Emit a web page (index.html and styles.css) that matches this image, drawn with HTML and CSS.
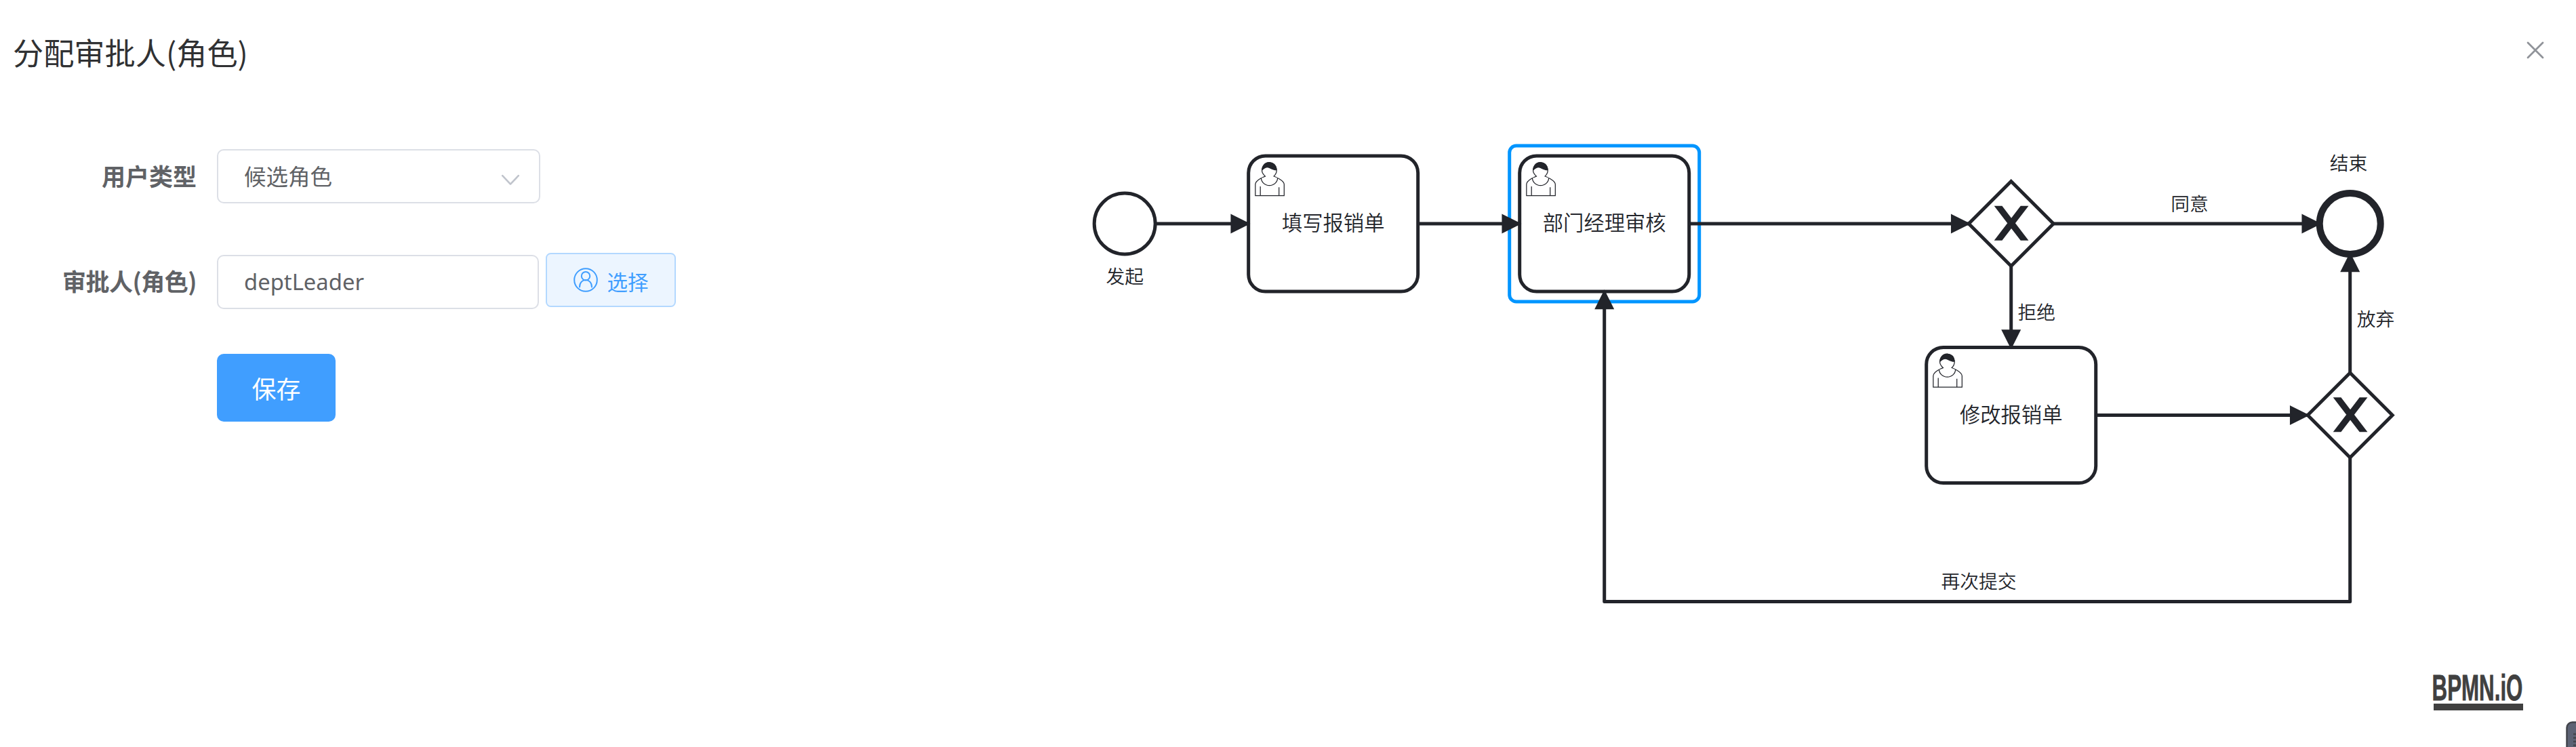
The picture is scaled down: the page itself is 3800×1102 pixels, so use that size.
FILE: index.html
```html
<!DOCTYPE html>
<html lang="zh-CN">
<head>
<meta charset="utf-8">
<title>分配审批人(角色)</title>
<link rel="stylesheet" href="styles.css">
</head>
<body>
<main class="dialog">
  <header class="dialog-header">
    <h1 class="dialog-title">分配审批人(角色)</h1>
    <button class="close" aria-label="关闭"><svg width="26" height="26" viewBox="0 0 26 26"><path d="M2 2 24 24M24 2 2 24"/></svg></button>
  </header>
  <div class="dialog-body">
    <form class="form">
      <div class="row row-type">
        <label class="label">用户类型</label>
        <div class="field select"><span>候选角色</span><svg class="chevron" width="28" height="18" viewBox="0 0 28 18"><path d="M2.2 2.2 14 14.6 25.8 2.2"/></svg></div>
      </div>
      <div class="row row-user">
        <label class="label">审批人(角色)</label>
        <div class="field input">deptLeader</div>
        <button class="pick" type="button">
          <svg width="36" height="36" viewBox="0 0 36 36"><circle cx="18" cy="18" r="16.8"/><circle cx="18" cy="12.2" r="6.2"/><path d="M9 28.5C9 14.5 27 14.5 27 28.5"/></svg>
          <span>选择</span>
        </button>
      </div>
      <div class="row row-save"><button class="save" type="button">保存</button></div>
    </form>
    <svg class="canvas" width="2200" height="962" viewBox="1600 140 2200 962">
      <defs>
        <marker id="arrow" viewBox="0 0 20 20" refX="11" refY="10" markerWidth="10" markerHeight="10" orient="auto"><path class="arrowhead" d="M1 5 11 10 1 15Z"/></marker>
        <g id="task">
          <rect class="shape" width="100" height="80" rx="10"/>
          <g transform="translate(15 12)">
            <path class="person" d="m0,0 c0.909,-0.845 1.594,-2.049 1.594,-3.385 0,-2.554 -1.805,-4.622 -4.357,-4.622 -2.552,0 -4.288,2.068 -4.288,4.622 0,1.348 0.974,2.562 1.896,3.405 -0.529,0.187 -5.669,2.097 -5.794,4.756 v6.718 h17 v-6.718 c0,-2.298 -5.528,-4.595 -6.051,-4.776z m-8,6 l0,5.5 m11,0 l0,-5"/>
            <path class="person" d="m2.162,1.009 c0,2.447 -2.158,4.431 -4.821,4.431 -2.665,0 -4.822,-1.981 -4.822,-4.431"/>
            <path class="person hair" d="m-6.9,-3.8 c0,0 2.251,-2.358 4.274,-1.177 2.024,1.181 4.221,1.537 4.124,0.965 -0.098,-0.57 -0.117,-3.791 -4.191,-4.136 -3.572,0.001 -4.208,3.67 -4.207,4.348z"/>
          </g>
        </g>
        <g id="gateway">
          <path class="shape" d="M0-25 25 0 0 25-25 0Z"/>
          <path class="cross" d="M-1.57-.29-9 9.42h3.43L.14 1.96 5.86 9.42H9.29L1.86-.29 9.29-10H5.86L.14-2.54-5.57-10H-9Z"/>
        </g>
      </defs>
      <g transform="translate(1841.7 230) scale(2.5)">
        <circle class="shape" cx="-73" cy="40" r="18"/>
        <use href="#task"/>
        <rect class="selection" x="154" y="-6" width="112" height="92" rx="4"/>
        <use href="#task" x="160"/>
        <use href="#task" x="400" y="113"/>
        <use href="#gateway" x="450" y="40"/>
        <use href="#gateway" x="650" y="153"/>
        <circle class="shape end" cx="650" cy="40" r="18"/>
        <g class="flows">
          <path d="M-55 40H0"/><path d="M100 40H160"/><path d="M260 40H425"/><path d="M475 40H632"/>
          <path d="M450 65V113"/><path d="M500 153H625"/><path d="M650 128V58"/><path d="M650 178V263H210V80"/>
        </g>
      </g>
      <g class="names">
        <text x="1966.7" y="340">填写报销单</text>
        <text x="2366.7" y="340">部门经理审核</text>
        <text x="2966.7" y="623">修改报销单</text>
      </g>
      <g class="names small">
        <text x="1659.2" y="418">发起</text>
        <text x="3464.5" y="251">结束</text>
        <text x="3230" y="311">同意</text>
        <text x="3004.2" y="471">拒绝</text>
        <text x="3504.5" y="481">放弃</text>
        <text x="2919" y="868">再次提交</text>
      </g>
      <g class="logo">
        <rect x="3590" y="1038" width="132" height="10"/>
        <text transform="translate(3587.6 1033) scale(.585 1)">BPMN.iO</text>
      </g>
      <g class="widget">
        <rect x="3786.5" y="1065.5" width="40" height="60" rx="8"/>
        <path d="M3796 1083h6M3796 1088.500h6M3796 1094h6M3796 1099.500h6"/>
      </g>
    </svg>
  </div>
</main>
</body>
</html>
```
FILE: styles.css
```css
* { box-sizing: border-box; }
body {
  margin: 0;
  background: #fff;
  color: #606266;
  font-family: "Noto Sans CJK SC", sans-serif;
  overflow: hidden;
}
button { font: inherit; padding: 0; margin: 0; }
.dialog { width: 3800px; height: 1102px; display: flex; flex-direction: column; }
.dialog-header {
  height: 140px;
  padding: 47px 47px 0 19px;
  display: flex;
  justify-content: space-between;
  align-items: flex-start;
}
.dialog-title { margin: 0; font-size: 45.2px; line-height: 60px; font-weight: 400; color: #303133; }
.close { border: 0; background: none; height: 26px; margin-top: 14px; }
.close svg { display: block; fill: none; stroke: #909399; stroke-width: 2.8; stroke-linecap: round; }
.dialog-body { display: flex; height: 962px; }
.form { width: 1600px; padding-top: 80px; }
.row { display: flex; align-items: flex-start; }
.row-type { height: 153px; }
.row-user { height: 149px; }
.label { width: 320px; padding-right: 30px; text-align: right; font-size: 35px; font-weight: 700; line-height: 78px; }
.row-user .label { padding-top: 2px; letter-spacing: -.5px; }
.field {
  height: 80px;
  border: 2px solid #dcdfe6;
  border-radius: 10px;
  padding: 0 28px 0 38px;
  display: flex;
  align-items: center;
  justify-content: space-between;
  font-size: 32.5px;
}
.select { width: 477px; }
.select span { margin-top: -3px; }
.input { width: 475px; margin-top: 3px; padding-bottom: 2px; font-size: 32.8px; font-family: "Noto Sans", "Noto Sans CJK SC", sans-serif; }
.chevron { margin-top: 12px; fill: none; stroke: #c0c4cc; stroke-width: 2.6; stroke-linecap: round; stroke-linejoin: round; }
.pick {
  width: 192px;
  height: 80px;
  margin-left: 10px;
  border: 2px solid #b3d8ff;
  border-radius: 7.5px;
  background: #ecf5ff;
  color: #409eff;
  font-size: 30.5px;
  display: flex;
  align-items: center;
  justify-content: center;
  gap: 14px;
}
.pick span { margin-top: 3px; }
.pick svg { fill: none; stroke: #409eff; stroke-width: 2; stroke-linecap: round; }
.row-save { padding-left: 320px; }
.save { width: 175px; height: 100px; border: 0; border-radius: 10px; background: #409eff; color: #fff; font-size: 36px; }

.canvas { display: block; }
.shape { fill: #fff; stroke: #22242a; stroke-width: 2; }
.end { stroke-width: 4; }
.person { fill: #fff; stroke: #22242a; stroke-width: .5; }
.hair, .cross { fill: #22242a; }
.cross { stroke: #22242a; stroke-width: 1; }
.selection { fill: none; stroke: #0095ff; stroke-width: 2; }
.flows path { fill: none; stroke: #22242a; stroke-width: 2; stroke-linejoin: round; marker-end: url(#arrow); }
.arrowhead { fill: #22242a; stroke: #22242a; stroke-width: 1; }
.names { fill: #22242a; font-size: 30.3px; font-weight: 350; text-anchor: middle; }
.small { font-size: 27.8px; }
.logo { fill: #404040; }
.logo text { font-family: "Liberation Sans", sans-serif; font-weight: 700; font-size: 53.5px; stroke: #404040; stroke-width: .8; }
.widget { fill: #5c6274; stroke: #42444b; stroke-width: 2.5; }
```
